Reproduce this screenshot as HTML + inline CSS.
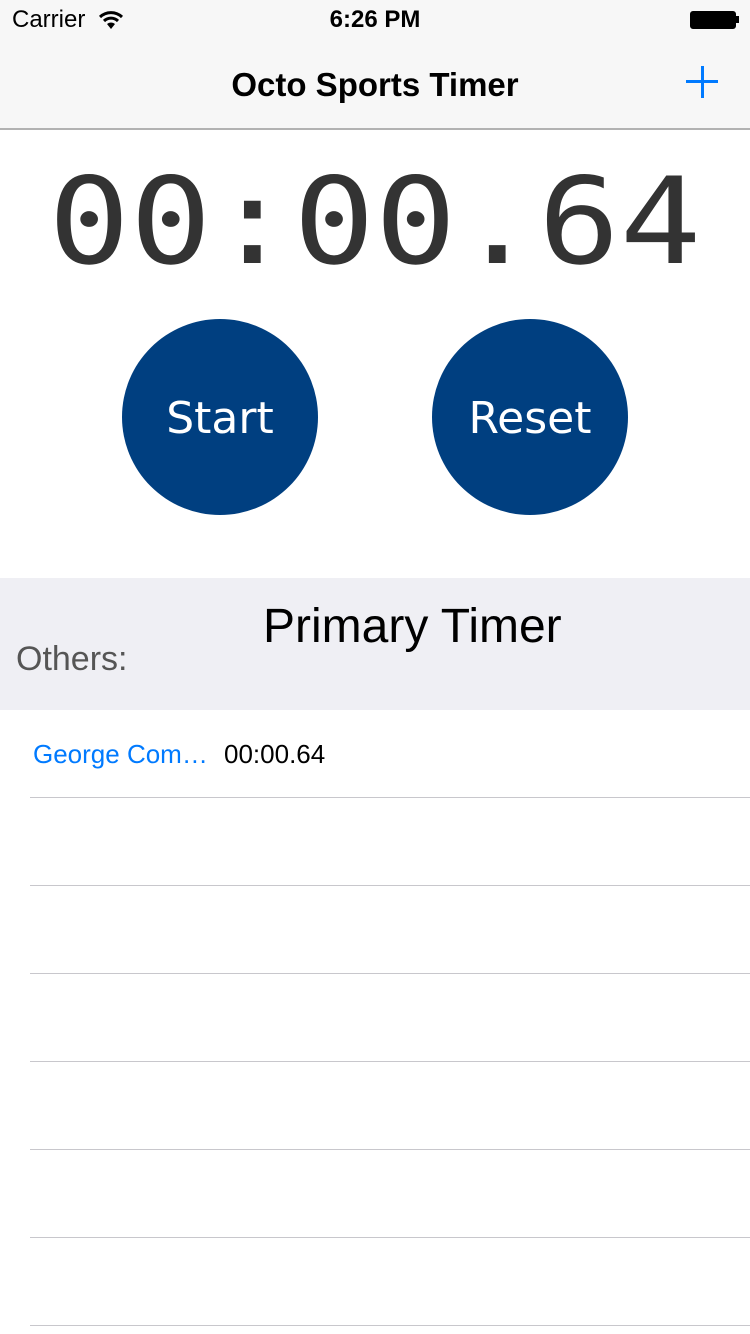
<!DOCTYPE html>
<html><head><style>
body{margin:0;width:750px;height:1334px;background:#fff;font-family:"Liberation Sans",sans-serif;position:relative;overflow:hidden}
.abs{position:absolute}
</style></head><body>
<div class="abs" style="left:0;top:0;width:750px;height:128px;background:#f7f7f7;border-bottom:2px solid #b2b2b2"></div>
<div class="abs" style="left:12px;top:6px;font-size:24px;color:#000">Carrier</div>
<svg class="abs" style="left:98px;top:10px" width="26" height="20" viewBox="0 0 26 20"><path d="M2 7 A16 16 0 0 1 24 7" stroke="#000" stroke-width="3" fill="none"/><path d="M6 11 A10 10 0 0 1 20 11" stroke="#000" stroke-width="3" fill="none"/><path d="M13 19 L9 14 A6 6 0 0 1 17 14 Z" fill="#000"/></svg>
<div class="abs" style="left:0;width:750px;top:6px;text-align:center;font-size:24px;font-weight:bold">6:26 PM</div>
<div class="abs" style="left:690px;top:11px;width:44px;height:16px;background:#000;border-radius:3px;border:1px solid #000"></div>
<div class="abs" style="left:736px;top:16px;width:3px;height:7px;background:#000"></div>
<div class="abs" style="left:0;width:750px;top:66px;text-align:center;font-size:33px;font-weight:bold">Octo Sports Timer</div>
<div class="abs" style="left:686px;top:80px;width:32px;height:3px;background:#007aff"></div>
<div class="abs" style="left:701px;top:66px;width:3px;height:32px;background:#007aff"></div>
<div class="abs" style="left:0;width:750px;top:151px;text-align:center;font-family:'DejaVu Sans Mono',monospace;font-size:120px;color:#333;line-height:144px;transform:scaleX(1.13);transform-origin:376px 0">00:00.64</div>
<div class="abs" style="left:122px;top:319px;width:196px;height:196px;border-radius:50%;background:#003f80;color:#fff;font-family:'DejaVu Sans',sans-serif;font-size:44px;text-align:center;line-height:200px">Start</div>
<div class="abs" style="left:432px;top:319px;width:196px;height:196px;border-radius:50%;background:#003f80;color:#fff;font-family:'DejaVu Sans',sans-serif;font-size:44px;text-align:center;line-height:200px">Reset</div>
<div class="abs" style="left:0;top:578px;width:750px;height:132px;background:#efeff4"></div>
<div class="abs" style="left:263px;top:599px;font-size:48px">Primary Timer</div>
<div class="abs" style="left:16px;top:640px;font-size:34px;color:#555">Others:</div>
<div class="abs" style="left:33px;top:739px;font-size:26px;color:#007aff">George Com…</div>
<div class="abs" style="left:224px;top:739px;font-size:26px;color:#000">00:00.64</div>
<div class="abs" style="left:30px;top:797px;width:720px;height:1px;background:#c8c7cc"></div>
<div class="abs" style="left:30px;top:885px;width:720px;height:1px;background:#c8c7cc"></div>
<div class="abs" style="left:30px;top:973px;width:720px;height:1px;background:#c8c7cc"></div>
<div class="abs" style="left:30px;top:1061px;width:720px;height:1px;background:#c8c7cc"></div>
<div class="abs" style="left:30px;top:1149px;width:720px;height:1px;background:#c8c7cc"></div>
<div class="abs" style="left:30px;top:1237px;width:720px;height:1px;background:#c8c7cc"></div>
<div class="abs" style="left:30px;top:1325px;width:720px;height:1px;background:#c8c7cc"></div>
</body></html>
